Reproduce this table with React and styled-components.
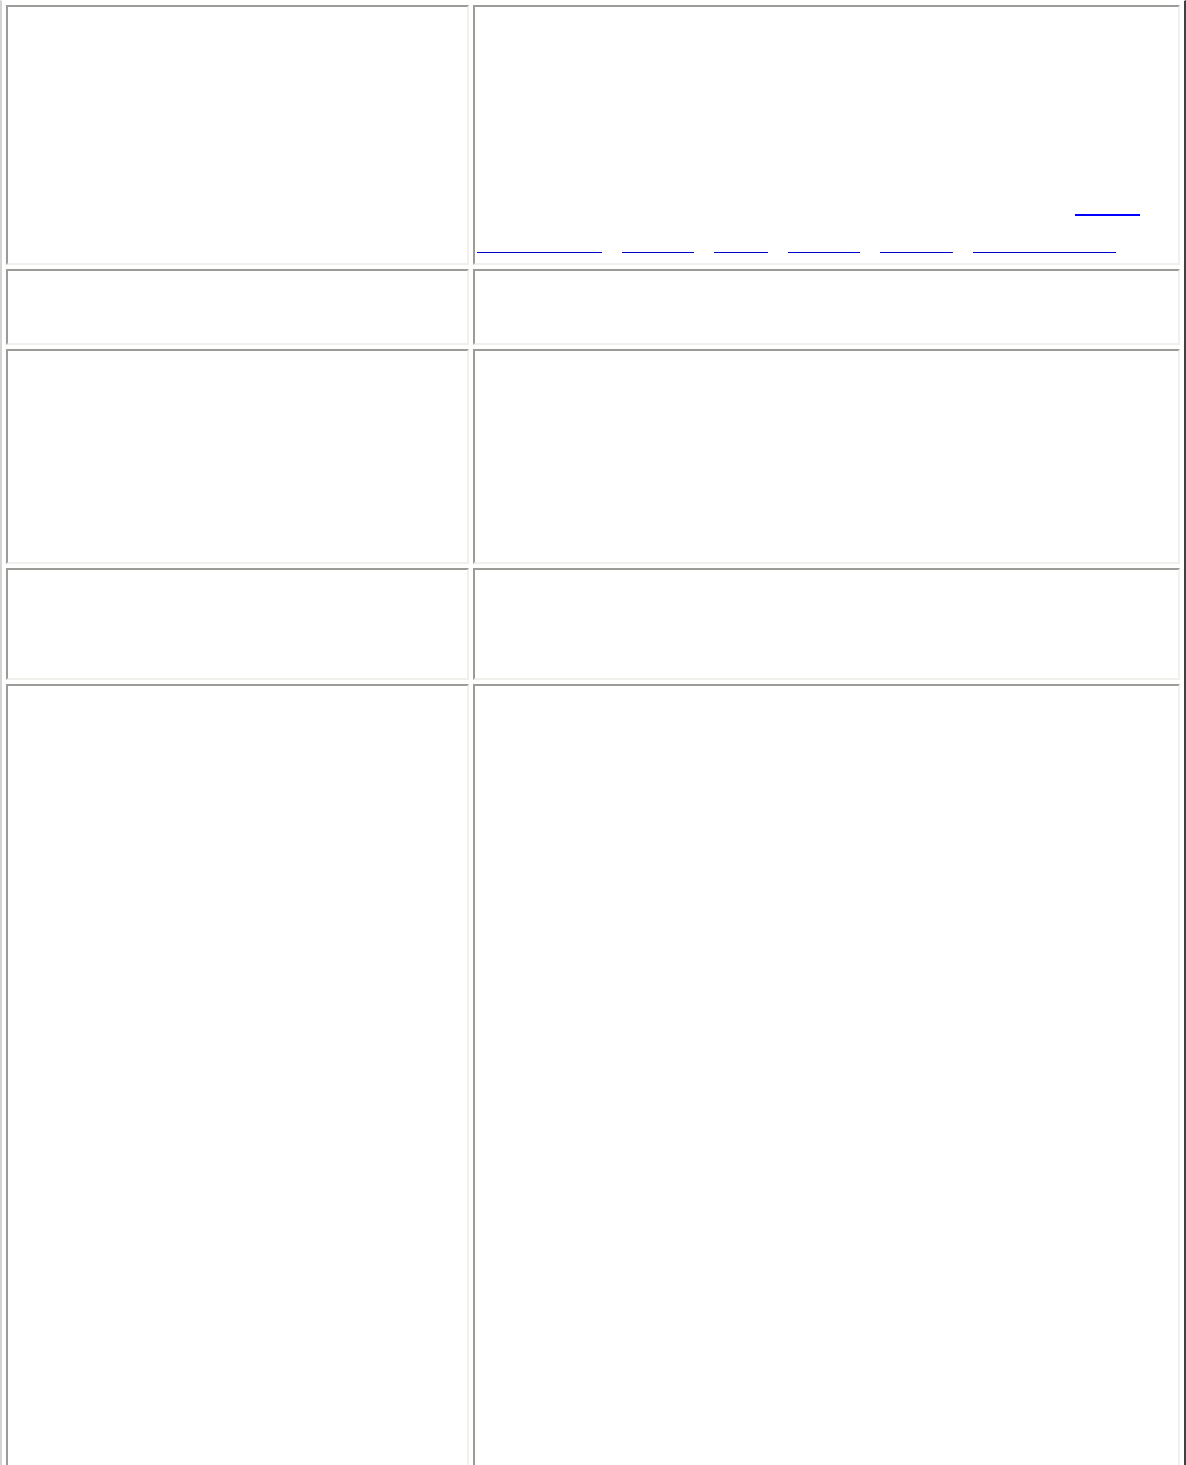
import React from 'react'
import styled, { createGlobalStyle } from 'styled-components'

const GlobalStyle = createGlobalStyle`
  html, body {
    margin: 0;
    padding: 0;
    background: #ffffff;
    font-family: "Liberation Serif", "Times New Roman", serif;
  }
`

const Grid = styled.div`
  display: grid;
  grid-template-columns: 463px 707px;
  gap: 4px;
  width: 1186px;
  box-sizing: border-box;
  padding: 4px 4px 0 4px;
  border-top: 1px solid #ffffff;
  border-left: 2px solid #d4d4d4;
  border-right: 2px solid #404040;
  background: #ffffff;
`

const Cell = styled.div`
  box-sizing: border-box;
  height: ${p => p.h}px;
  border-style: solid;
  border-width: 2px;
  border-color: #9b9b98 #f1f0ec #f1f0ec #9b9b98;
  display: flex;
  flex-direction: column;
`

const Links = styled.div`
  display: flex;
  flex-direction: column;
  padding-top: 207px;
`

const TopLine = styled.div`
  display: flex;
  justify-content: flex-end;
  padding-right: 38px;
`

const BottomLine = styled.div`
  display: flex;
  gap: 20px;
  padding-left: 2px;
  margin-top: 36px;
`

const Link = styled.a`
  display: block;
  width: ${p => p.w}px;
  height: 0;
  border-bottom: ${p => (p.big ? '2px solid #0000ff' : '1px solid #0000cc')};
  text-decoration: none;
`

const bottomLinks = [125, 72, 54, 72, 73, 143]

const rows = [260, 76, 215, 112, 900]

export default function App () {
  return (
    <>
      <GlobalStyle />
      <Grid>
        {rows.map((h, i) => (
          <React.Fragment key={i}>
            <Cell h={h} />
            <Cell h={h}>
              {i === 0 && (
                <Links>
                  <TopLine>
                    <Link href="#" w={65} big />
                  </TopLine>
                  <BottomLine>
                    {bottomLinks.map((w, j) => <Link key={j} href="#" w={w} />)}
                  </BottomLine>
                </Links>
              )}
            </Cell>
          </React.Fragment>
        ))}
      </Grid>
    </>
  )
}
